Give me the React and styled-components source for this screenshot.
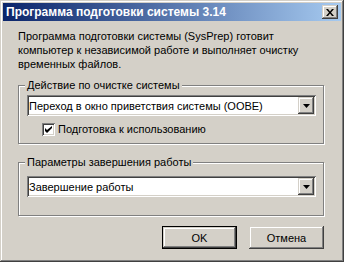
import React from "react";
import styled, { createGlobalStyle } from "styled-components";

const GlobalStyle = createGlobalStyle`
  html, body {
    margin: 0;
    padding: 0;
    background: #d4d0c8;
  }
  body {
    font-family: "Liberation Sans", Arial, sans-serif;
    font-size: 11px;
    color: #000;
  }
`;

const raised = `
  inset -1px -1px 0 #404040,
  inset 1px 1px 0 #d4d0c8,
  inset -2px -2px 0 #808080,
  inset 2px 2px 0 #ffffff
`;

const sunken = `
  inset 1px 1px 0 #808080,
  inset -1px -1px 0 #ffffff,
  inset 2px 2px 0 #404040,
  inset -2px -2px 0 #d4d0c8
`;

const Window = styled.div`
  box-sizing: border-box;
  width: 344px;
  height: 262px;
  padding: 3px;
  background: #d4d0c8;
  box-shadow: ${raised};
  display: flex;
  flex-direction: column;
`;

const TitleBar = styled.div`
  height: 18px;
  display: flex;
  align-items: center;
  padding: 0 3px;
  background: linear-gradient(to right, #0a246a, #a6caf0);
`;

const Title = styled.span`
  color: #fff;
  font-weight: bold;
  font-size: 12px;
`;

const CloseButton = styled.div`
  margin-left: auto;
  width: 16px;
  height: 14px;
  background: #d4d0c8;
  box-shadow: ${raised};
  display: flex;
  align-items: center;
  justify-content: center;
`;

const Body = styled.div`
  padding: 8px 17px 0 15px;
`;

const Description = styled.p`
  margin: 0;
  line-height: 14px;
`;

const Group = styled.fieldset`
  margin: ${(p) => p.$top}px 0 0;
  min-width: 0;
  padding: 0 7px ${(p) => p.$bottom}px 8px;
  border: 1px solid #808080;
  box-shadow: inset 1px 1px 0 #fff, 1px 1px 0 #fff;
`;

const Legend = styled.legend`
  margin-left: -2px;
  padding: 0 2px;
  line-height: 14px;
  background: #d4d0c8;
`;

const Combo = styled.div`
  box-sizing: border-box;
  height: 21px;
  margin-top: ${(p) => p.$top}px;
  background: #fff;
  box-shadow: ${sunken};
  display: flex;
  align-items: center;
  padding: 2px 2px 2px 2px;
`;

const ComboText = styled.span`
  flex: 1;
  white-space: nowrap;
`;

const ComboButton = styled.div`
  width: 16px;
  height: 17px;
  background: #d4d0c8;
  box-shadow: ${raised};
  display: flex;
  align-items: center;
  justify-content: center;
`;

const CheckRow = styled.label`
  display: flex;
  align-items: center;
  gap: 3px;
  margin-top: 6px;
  padding-left: 15px;
  line-height: 14px;
`;

const CheckBox = styled.span`
  width: 13px;
  height: 13px;
  background: #fff;
  box-shadow: ${sunken};
  display: flex;
  align-items: center;
  justify-content: center;
`;

const Buttons = styled.div`
  display: flex;
  justify-content: flex-end;
  gap: 12px;
  margin-top: 10px;
`;

const Button = styled.button`
  box-sizing: border-box;
  width: 75px;
  height: 23px;
  padding: 0;
  font: inherit;
  color: #000;
  background: #d4d0c8;
  border: ${(p) => (p.$default ? "1px solid #000" : "none")};
  box-shadow: ${raised};
`;

const Arrow = () => (
  <svg width="7" height="4" viewBox="0 0 7 4">
    <path d="M0 0h7L3.5 4z" fill="#000" />
  </svg>
);

const Cross = () => (
  <svg width="8" height="7" viewBox="0 0 8 7">
    <path d="M0 0h2l2 2.5L6 0h2L5 3.5 8 7H6L4 4.5 2 7H0l3-3.5z" fill="#000" />
  </svg>
);

const Check = () => (
  <svg width="7" height="7" viewBox="0 0 7 7">
    <path d="M0 2v3l2 2 5-5V-0L2 4z" fill="#000" />
  </svg>
);

export default function App() {
  return (
    <>
      <GlobalStyle />
      <Window>
        <TitleBar>
          <Title>Программа подготовки системы 3.14</Title>
          <CloseButton>
            <Cross />
          </CloseButton>
        </TitleBar>
        <Body>
          <Description>
            Программа подготовки системы (SysPrep) готовит
            <br />
            компьютер к независимой работе и выполняет очистку
            <br />
            временных файлов.
          </Description>
          <Group $top={7} $bottom={7}>
            <Legend>Действие по очистке системы</Legend>
            <Combo $top={3}>
              <ComboText>Переход в окно приветствия системы (OOBE)</ComboText>
              <ComboButton>
                <Arrow />
              </ComboButton>
            </Combo>
            <CheckRow>
              <CheckBox>
                <Check />
              </CheckBox>
              Подготовка к использованию
            </CheckRow>
          </Group>
          <Group $top={11} $bottom={18}>
            <Legend>Параметры завершения работы</Legend>
            <Combo $top={7}>
              <ComboText>Завершение работы</ComboText>
              <ComboButton>
                <Arrow />
              </ComboButton>
            </Combo>
          </Group>
          <Buttons>
            <Button $default>OK</Button>
            <Button>Отмена</Button>
          </Buttons>
        </Body>
      </Window>
    </>
  );
}
